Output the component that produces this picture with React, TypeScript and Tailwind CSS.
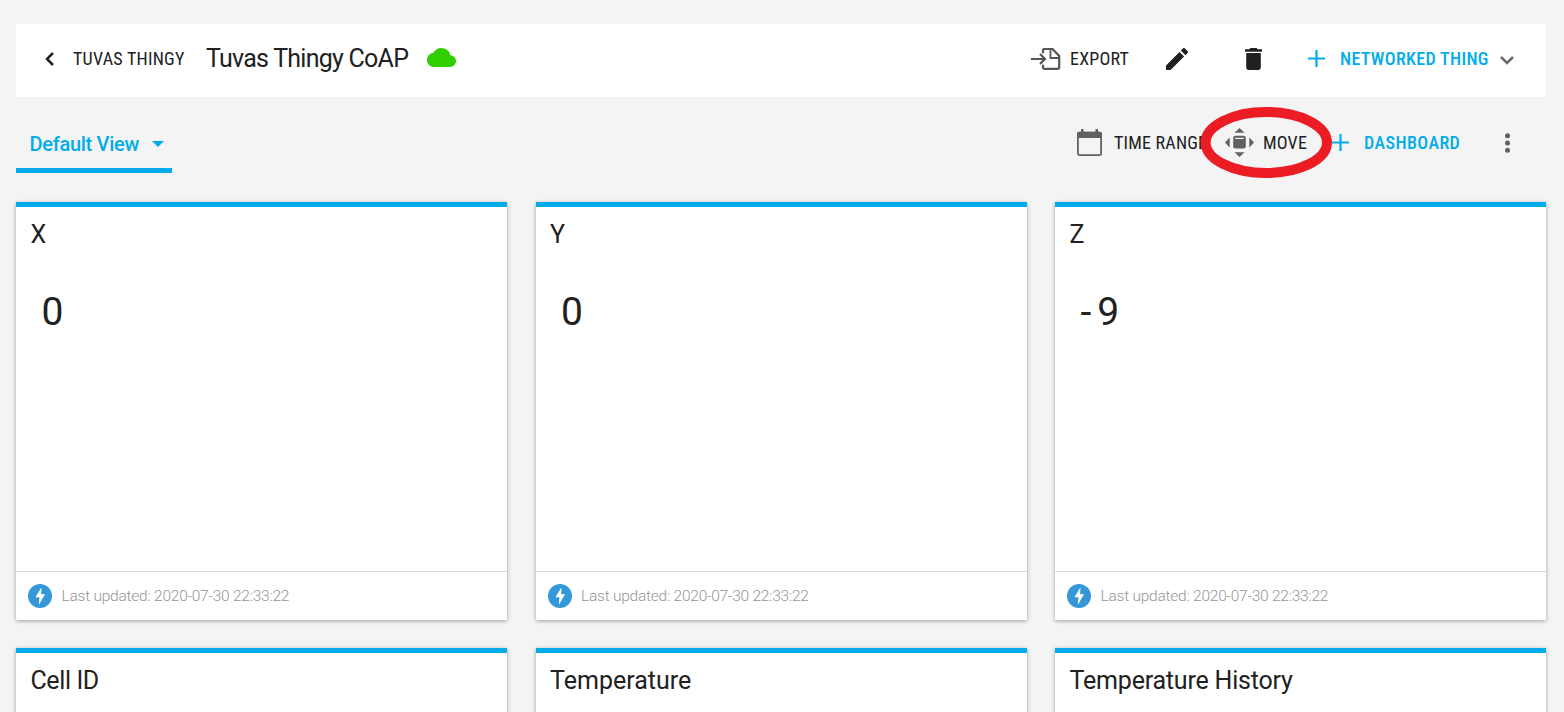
type Metric = { title: string; value?: string; titleClass?: string };

const METRICS: Metric[] = [
  { title: "X", value: "0" },
  { title: "Y", value: "0" },
  { title: "Z", value: "-9" },
  { title: "Cell ID", titleClass: "tracking-[-0.4px]" },
  { title: "Temperature", titleClass: "tracking-[0px]" },
  { title: "Temperature History", titleClass: "tracking-[-0.2px]" },
];

const CAPS = "whitespace-pre text-[18px] leading-6 [font-stretch:75%]";

function Plus() {
  return (
    <svg className="h-[17px] w-[17px] shrink-0" viewBox="0 0 17 17" stroke="#00acea" strokeWidth="2.200">
      <path d="M0 8.500h17M8.500 0v17" />
    </svg>
  );
}

function ExportIcon() {
  return (
    <svg className="h-[22px] w-[30px] shrink-0" viewBox="0 0 30 22" fill="none" stroke="#555" strokeWidth="2.200">
      <path d="M0 11h13.500M9 6l5 5-5 5" />
      <path d="M12 5.200V2.500Q12 1 13.500 1h8l6.700 7v11q0 1.800-1.800 1.800h-13Q12 20.800 12 19.500v-2.700" />
      <path d="M19.500 1v9h8.700" strokeWidth="1.800" />
    </svg>
  );
}

function CalendarIcon() {
  return (
    <svg className="h-[27px] w-[25px] shrink-0" viewBox="0 0 25 27">
      <rect x="0.9" y="3.700" width="23.200" height="22.400" rx="1.800" fill="none" stroke="#616161" strokeWidth="1.800" />
      <path d="M0 9V4.500Q0 2.700 2 2.700h2V0h2.500v2.700h12V0H21v2.700h2q2 0 2 1.800V9z" fill="#616161" />
    </svg>
  );
}

function MoveIcon() {
  return (
    <svg className="h-[29px] w-[29px] shrink-0" viewBox="0 0 29 29" fill="#616161">
      <path d="M14.500 0l5 4.700h-10zM14.500 29l5-4.700h-10zM0 14.500l4.700-5v10zM29 14.500l-4.700-5v10z" />
      <rect x="8.200" y="7.700" width="12.600" height="12.800" rx="2.200" />
      <path d="M10.300 10.400h8.400" stroke="#f4f4f4" strokeWidth="1.200" />
    </svg>
  );
}

function Bolt() {
  return (
    <svg className="h-6 w-6 shrink-0" viewBox="0 0 24 24">
      <circle cx="12" cy="12" r="12" fill="#3498d8" />
      <path d="M13.500 3.200L7.400 13.300h4L10.900 20.700 17 10.300h-3.900z" fill="#fff" />
    </svg>
  );
}

function Card({ title, value, titleClass = "" }: Metric) {
  return (
    <section className="flex h-[418.500px] flex-col border-t-[5px] border-[#00acea] bg-white shadow-[0_1px_4px_rgba(0,0,0,0.36)]">
      <h2 className={`h-14 pt-[13px] pl-[14.500px] text-[25px] leading-[30px] whitespace-pre ${titleClass}`}>{title}</h2>
      {value !== undefined && (
        <>
          <p className="mt-[25px] pl-[25.500px] text-[39px] leading-[48px] tracking-[6px]">{value}</p>
          <footer className="mt-auto flex h-[49px] items-center gap-[9.500px] border-t border-[#d8d8d8] pl-3">
            <Bolt />
            <span className="text-[15.500px] leading-5 font-light tracking-[-0.23px] whitespace-pre text-[#959595]">
              Last updated: 2020-07-30 22:33:22
            </span>
          </footer>
        </>
      )}
    </section>
  );
}

export default function App() {
  return (
    <main className="h-[712px] overflow-hidden bg-[#f4f4f4] pt-6 pr-[18px] pl-4 font-['Roboto',sans-serif] text-[#212121]">
      <header className="flex h-[73px] items-center justify-between bg-white pr-8 pb-1 pl-[29px]">
        <div className="flex items-center">
          <svg className="h-[14px] w-[9px]" viewBox="0 0 9 14" fill="none" stroke="#212121" strokeWidth="2.500">
            <path d="M8 1L2 7l6 6" />
          </svg>
          <span className={`ml-[19px] w-[112px] tracking-[0.25px] ${CAPS}`}>TUVAS THINGY</span>
          <h1 className="ml-[21px] w-[202px] text-[25px] leading-[30px] tracking-[-0.75px] whitespace-pre">
            Tuvas Thingy CoAP
          </h1>
          <svg className="mb-[2px] ml-[19px] h-[19px] w-[29px]" viewBox="0 4 24 16" preserveAspectRatio="none" fill="#31ce00">
            <path d="M19.350 10.040C18.670 6.590 15.640 4 12 4 9.110 4 6.600 5.640 5.350 8.040 2.340 8.360 0 10.910 0 14c0 3.310 2.690 6 6 6h13c2.760 0 5-2.240 5-5 0-2.640-2.050-4.780-4.650-4.960z" />
          </svg>
        </div>
        <div className="flex items-center">
          <ExportIcon />
          <span className={`ml-[9px] w-[61px] tracking-[0.2px] ${CAPS}`}>EXPORT</span>
          <svg className="ml-[35px] h-[22px] w-[22px]" viewBox="3 3 18 18" fill="#212121">
            <path d="M3 17.250V21h3.750L17.810 9.940l-3.750-3.750L3 17.250zM20.710 7.040a1 1 0 0 0 0-1.410l-2.340-2.340a1 1 0 0 0-1.410 0l-1.830 1.830 3.750 3.750 1.830-1.830z" />
          </svg>
          <svg className="ml-[57px] h-[22px] w-[17px]" viewBox="5 3 14 18" preserveAspectRatio="none" fill="#212121">
            <path d="M6 19c0 1.100.9 2 2 2h8c1.100 0 2-.9 2-2V7H6v12zM19 4h-3.500l-1-1h-5l-1 1H5v2h14V4z" />
          </svg>
          <div className="ml-[46px] flex items-center">
            <Plus />
            <span className={`ml-[15px] w-[150px] font-medium tracking-[0.33px] text-[#00acea] ${CAPS}`}>NETWORKED THING</span>
            <svg className="mt-1 ml-[10px] h-[9px] w-[14px]" viewBox="0 0 14 9" fill="none" stroke="#6b6b6b" strokeWidth="2.500">
              <path d="M1 1l6 6 6-6" />
            </svg>
          </div>
        </div>
      </header>

      <nav className="flex h-[104.500px] items-start justify-between">
        <button className="flex h-[76px] w-[156px] items-center border-b-[5px] border-[#00acea] pt-[23px] pl-[13.500px] text-[#00acea]">
          <span className="w-[109px] text-left text-[20px] leading-6 font-medium tracking-[-0.3px] whitespace-pre">
            Default View
          </span>
          <svg className="ml-[13px] h-[6px] w-3" viewBox="0 0 12 6" fill="currentColor">
            <path d="M0 0h12L6 6z" />
          </svg>
        </button>

        <div className="relative flex h-[91px] items-center pr-9">
          <CalendarIcon />
          <span className={`ml-3 w-[93px] tracking-[0.2px] ${CAPS}`}>TIME RANGE</span>
          <div className="ml-[18px] flex items-center">
            <MoveIcon />
            <span className={`ml-[9px] w-[46px] tracking-[0.2px] ${CAPS}`}>MOVE</span>
          </div>
          <div className="ml-[23px] flex items-center">
            <Plus />
            <span className={`ml-[15px] w-[97px] font-medium tracking-[0.42px] text-[#00acea] ${CAPS}`}>DASHBOARD</span>
          </div>
          <svg className="ml-[44px] h-5 w-[5px]" viewBox="0 0 5 20" fill="#616161">
            <circle cx="2.500" cy="2.700" r="2.500" />
            <circle cx="2.500" cy="10" r="2.500" />
            <circle cx="2.500" cy="17.300" r="2.500" />
          </svg>
          <svg className="absolute top-[10px] right-[214px] h-[71px] w-[132px]" viewBox="0 0 132 71" fill="none">
            <ellipse cx="66.300" cy="35.500" rx="60.700" ry="30.500" stroke="#ec1c24" strokeWidth="10" />
          </svg>
        </div>
      </nav>

      <div className="grid grid-cols-3 gap-x-[28.500px] gap-y-[28px]">
        {METRICS.map((m) => (
          <Card key={m.title} {...m} />
        ))}
      </div>
    </main>
  );
}
